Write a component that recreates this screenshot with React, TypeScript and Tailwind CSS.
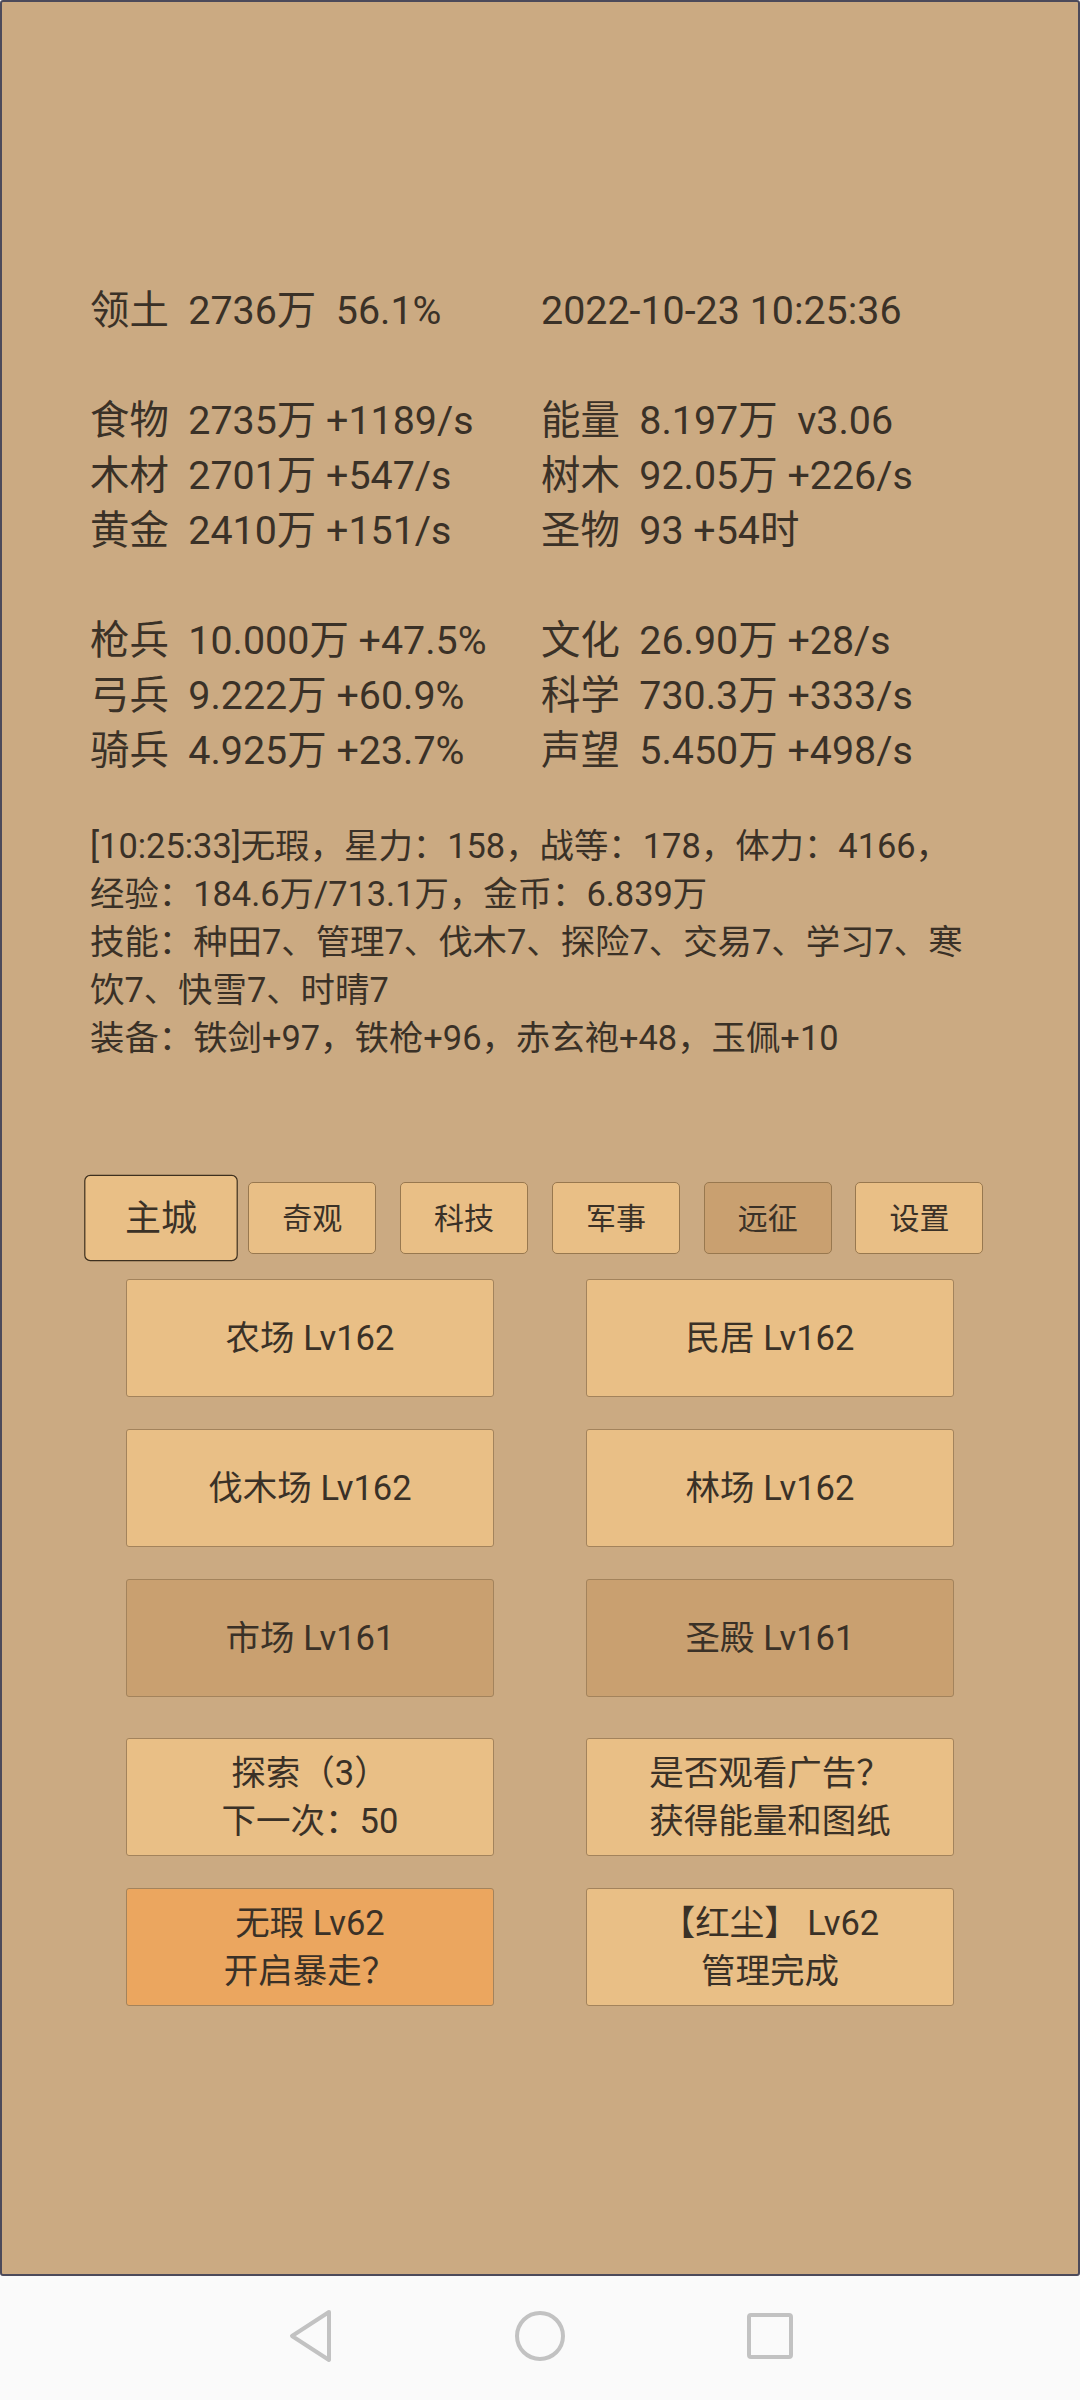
import React from 'react';

const stats: [string, string][] = [
  ['领土  2736万  56.1%', '2022-10-23 10:25:36'],
  ['', ''],
  ['食物  2735万 +1189/s', '能量  8.197万  v3.06'],
  ['木材  2701万 +547/s', '树木  92.05万 +226/s'],
  ['黄金  2410万 +151/s', '圣物  93 +54时'],
  ['', ''],
  ['枪兵  10.000万 +47.5%', '文化  26.90万 +28/s'],
  ['弓兵  9.222万 +60.9%', '科学  730.3万 +333/s'],
  ['骑兵  4.925万 +23.7%', '声望  5.450万 +498/s'],
];

const logLines = [
  '[10:25:33]无瑕，星力：158，战等：178，体力：4166，',
  '经验：184.6万/713.1万，金币：6.839万',
  '技能：种田7、管理7、伐木7、探险7、交易7、学习7、寒',
  '饮7、快雪7、时晴7',
  '装备：铁剑+97，铁枪+96，赤玄袍+48，玉佩+10',
];

const tabs = ['主城', '奇观', '科技', '军事', '远征', '设置'];

type Tone = 'light' | 'dark' | 'orange';

const toneClass: Record<Tone, string> = {
  light: 'bg-[#e9bf86]',
  dark: 'bg-[#c9a070]',
  orange: 'bg-[#eba65f]',
};

function BuildingButton({ lines, tone = 'light' }: { lines: string[]; tone?: Tone }) {
  return (
    <button
      type="button"
      className={`w-[368px] h-[118px] rounded-[3px] border border-[#a3835c] ${toneClass[tone]} flex flex-col items-center justify-center text-[34.5px] leading-[48px] text-[#3a3127] whitespace-pre`}
    >
      {lines.map((l) => (
        <span key={l}>{l}</span>
      ))}
    </button>
  );
}

export default function App() {
  return (
    <div className="w-[1080px] h-[2400px] flex flex-col font-['Roboto','Noto_Sans_CJK_SC',sans-serif] text-[#3a3127]">
      <div className="h-[2276px] bg-[#cbaa82] border-2 border-[#4c4a5a] rounded-[3px] flex flex-col">
        {/* stats */}
        <div className="pt-[281px] px-[88px] text-[39.4px] leading-[55px] whitespace-pre">
          {stats.map(([a, b], i) => (
            <div key={i} className="grid grid-cols-[451px_1fr] h-[55px]">
              <span>{a}</span>
              <span>{b}</span>
            </div>
          ))}
        </div>

        {/* log */}
        <div className="mt-[44px] px-[88px] text-[34.4px] leading-[48px] whitespace-pre">
          {logLines.map((l) => (
            <div key={l}>{l}</div>
          ))}
        </div>

        {/* tabs */}
        <div className="mt-[120px] flex justify-center gap-[23.8px]">
          {tabs.map((t, i) => (
            <button
              key={t}
              type="button"
              className={`w-[128px] h-[72px] rounded-[5px] text-[30px] flex items-center justify-center ${
                i === 0
                  ? 'scale-[1.2] border-[1.6px] border-[#3e301f] bg-[#e9bf86]'
                  : i === 4
                  ? 'border border-[#98784f] bg-[#c9a070]'
                  : 'border border-[#98784f] bg-[#e9bf86]'
              }`}
            >
              {t}
            </button>
          ))}
        </div>

        {/* buildings */}
        <div className="mt-[25px] flex flex-col items-center">
          <div className="flex gap-[92px]">
            <BuildingButton lines={['农场 Lv162']} />
            <BuildingButton lines={['民居 Lv162']} />
          </div>
          <div className="mt-[32px] flex gap-[92px]">
            <BuildingButton lines={['伐木场 Lv162']} />
            <BuildingButton lines={['林场 Lv162']} />
          </div>
          <div className="mt-[32px] flex gap-[92px]">
            <BuildingButton lines={['市场 Lv161']} tone="dark" />
            <BuildingButton lines={['圣殿 Lv161']} tone="dark" />
          </div>
          <div className="mt-[41px] flex gap-[92px]">
            <BuildingButton lines={['探索（3）', '下一次：50']} />
            <BuildingButton lines={['是否观看广告？', '获得能量和图纸']} />
          </div>
          <div className="mt-[32px] flex gap-[92px]">
            <BuildingButton lines={['无瑕 Lv62', '开启暴走？']} tone="orange" />
            <BuildingButton lines={['【红尘】 Lv62', '管理完成']} />
          </div>
        </div>
      </div>

      {/* system nav bar */}
      <div className="flex-1 bg-[#fafafa] flex items-center justify-center pb-[4px]">
        <div className="w-[230px] flex justify-center">
          <svg width="46" height="54" viewBox="0 0 46 54" fill="none" stroke="#c2c2c2" strokeWidth="4" strokeLinejoin="round">
            <path d="M42 3 L5 27 L42 51 Z" />
          </svg>
        </div>
        <div className="w-[230px] flex justify-center">
          <svg width="52" height="52" viewBox="0 0 52 52" fill="none" stroke="#c2c2c2" strokeWidth="4">
            <circle cx="26" cy="26" r="23" />
          </svg>
        </div>
        <div className="w-[230px] flex justify-center">
          <svg width="48" height="48" viewBox="0 0 48 48" fill="none" stroke="#c2c2c2" strokeWidth="4">
            <rect x="3" y="3" width="42" height="42" rx="2" />
          </svg>
        </div>
      </div>
    </div>
  );
}
